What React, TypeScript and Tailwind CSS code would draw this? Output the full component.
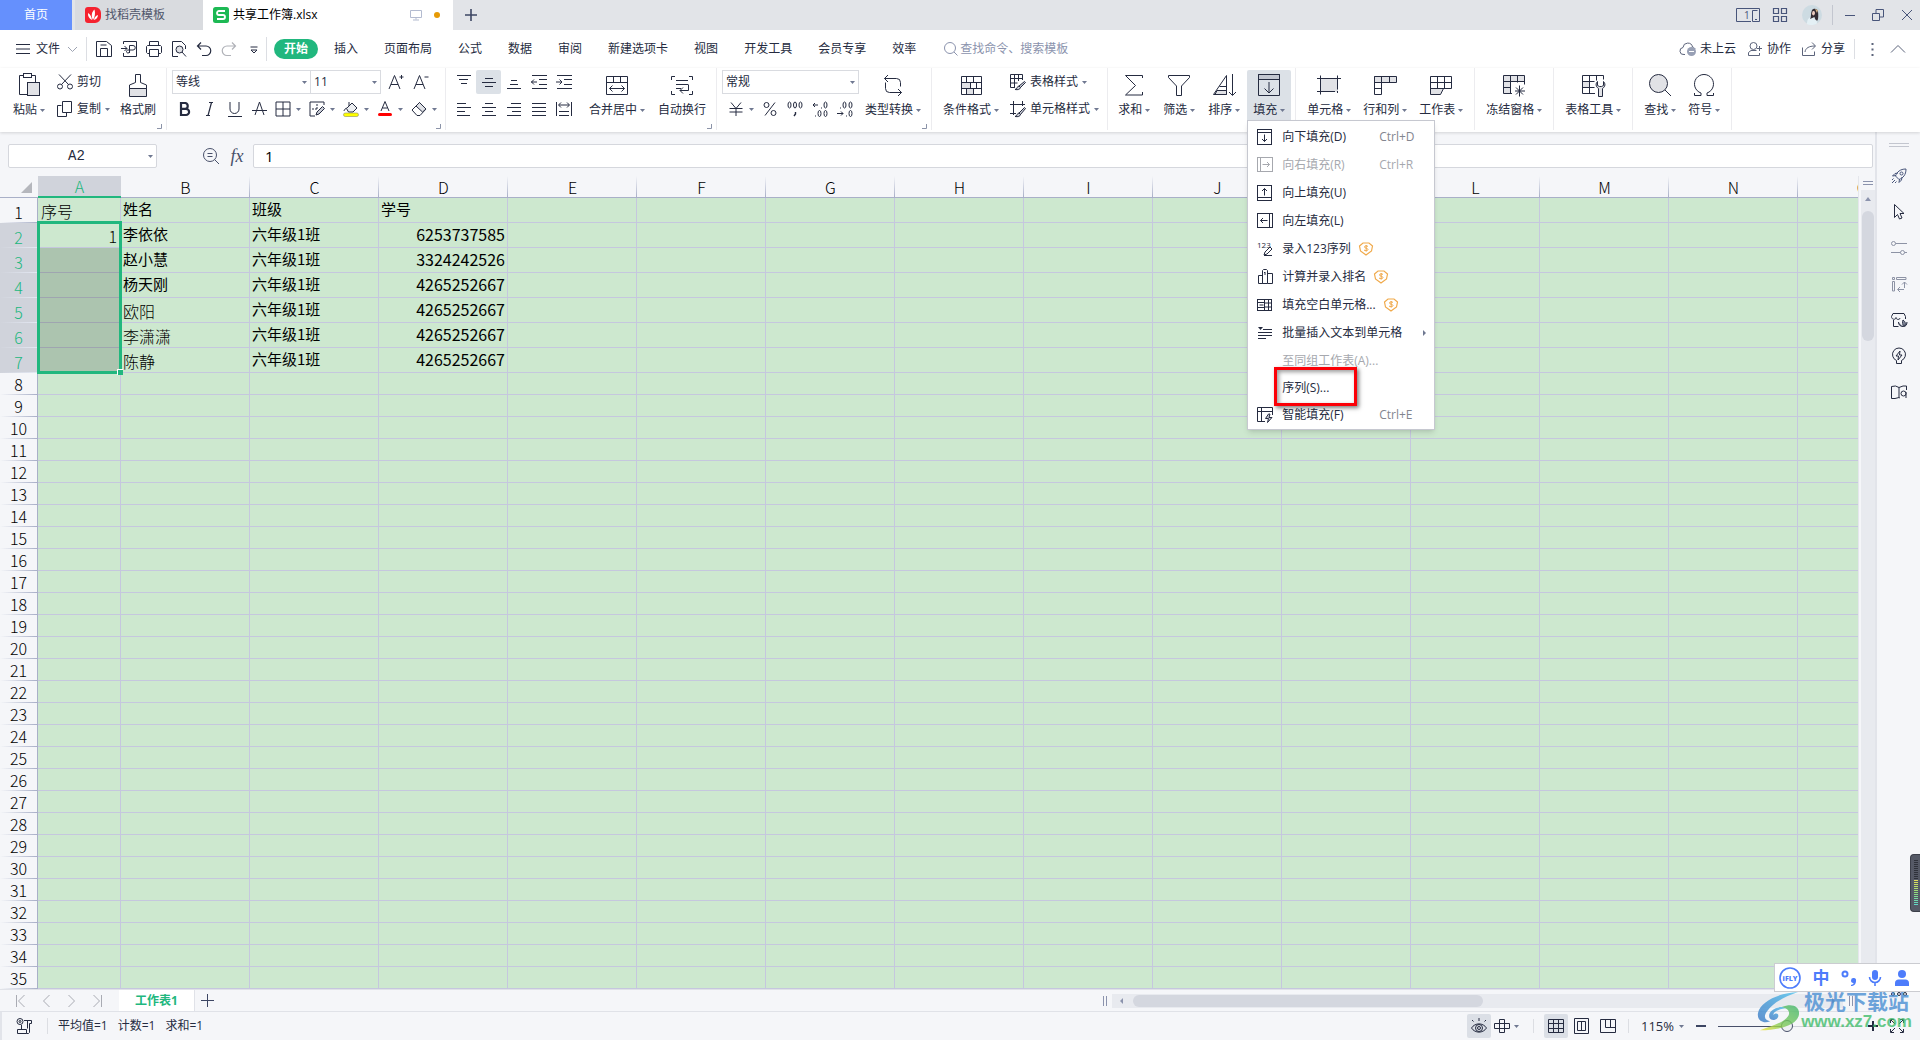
import type { ReactNode } from "react";
import { clsx } from "clsx";

const COLUMNS = ["A", "B", "C", "D", "E", "F", "G", "H", "I", "J", "K", "L", "M", "N", "O"];
const ROW_COUNT = 36;

const STUDENTS = [
    { name: "李依依", grade: "六年级1班", id: "6253737585" },
    { name: "赵小慧", grade: "六年级1班", id: "3324242526" },
    { name: "杨天刚", grade: "六年级1班", id: "4265252667" },
    { name: "欧阳", grade: "六年级1班", id: "4265252667", loose: true },
    { name: "李潇潇", grade: "六年级1班", id: "4265252667", loose: true },
    { name: "陈静", grade: "六年级1班", id: "4265252667", loose: true },
];

const TABS = ["插入", "页面布局", "公式", "数据", "审阅", "新建选项卡", "视图", "开发工具", "会员专享", "效率"];

function Icon({ w = 16, h = 16, className, children }: { w?: number; h?: number; className?: string; children: ReactNode }) {
    return (
        <svg width={w} height={h} viewBox={`0 0 ${w} ${h}`} fill="none" stroke="currentColor" className={clsx("shrink-0 overflow-visible", className)} aria-hidden="true">
            {children}
        </svg>
    );
}

function Caret({ className }: { className?: string }) {
    return (
        <svg width="5" height="3" viewBox="0 0 5 3" className={clsx("shrink-0 fill-[#6f7891]", className)} aria-hidden="true">
            <path d="M0 0h5L2.5 3z" />
        </svg>
    );
}

/* Ribbon building blocks */

function Group({ className = "px-[5px]", launcher, children }: { className?: string; launcher?: boolean; children: ReactNode }) {
    return (
        <div className={clsx("relative flex h-[62px] shrink-0 items-start border-r border-[#ececef] pt-[2px]", className)}>
            {children}
            {launcher && (
                <button aria-label="更多设置" className="absolute right-1 bottom-[1px] text-[#8b93a8]">
                    <Icon w={5} h={5}><path d="M4.5 0v4.5H0" /></Icon>
                </button>
            )}
        </div>
    );
}

function BigButton({ label, caret = true, active, children }: { label: string; caret?: boolean; active?: boolean; children: ReactNode }) {
    return (
        <button className={clsx("flex h-[50px] shrink-0 flex-col items-center gap-[5px] rounded-t-xs px-[6px] pt-[3px]", active && "bg-[#dce1e7]")}>
            <Icon w={24} h={24}>{children}</Icon>
            <span className="flex items-center gap-[3px] leading-4 whitespace-nowrap">
                {label}
                {caret && <Caret />}
            </span>
        </button>
    );
}

function SmallButton({ label, caret, children }: { label: string; caret?: boolean; children: ReactNode }) {
    return (
        <button className="flex h-6 items-center gap-1 whitespace-nowrap">
            <Icon>{children}</Icon>
            {label}
            {caret && <Caret />}
        </button>
    );
}

function Cell({ label, active, children }: { label: string; active?: boolean; children: ReactNode }) {
    return (
        <button aria-label={label} className={clsx("flex h-6 w-[25px] items-center justify-center rounded-xs", active && "bg-[#dce1e7]")}>
            <Icon>{children}</Icon>
        </button>
    );
}

function DropCell({ label, children }: { label: string; children: ReactNode }) {
    return (
        <button aria-label={label} className="flex h-6 w-[34px] items-center gap-[5px]">
            <Icon>{children}</Icon>
            <Caret />
        </button>
    );
}

function Picker({ label, value, className }: { label: string; value: string; className?: string }) {
    return (
        <div className={clsx("relative h-6", className)}>
            <select aria-label={label} defaultValue={value} className="h-full w-full appearance-none border border-[#d9dbe0] bg-white pl-[3px] leading-5">
                <option>{value}</option>
            </select>
            <Caret className="pointer-events-none absolute top-[11px] right-1" />
        </div>
    );
}

/* Fill menu */

type MenuItem = { label: string; hint?: string; disabled?: boolean; paid?: boolean; sub?: boolean; marked?: boolean; icon?: ReactNode };

const MENU: MenuItem[] = [
    { label: "向下填充(D)", hint: "Ctrl+D", icon: <><rect x=".5" y=".5" width="14" height="15" /><path d="M.5 3.5h14M7.5 5.5v7M5 10l2.5 2.5L10 10" /></> },
    { label: "向右填充(R)", hint: "Ctrl+R", disabled: true, icon: <><rect x=".5" y=".5" width="15" height="14" /><path d="M3.5.5v14M5.5 7.5h7M10 5l2.5 2.5L10 10" /></> },
    { label: "向上填充(U)", icon: <><rect x=".5" y=".5" width="14" height="15" /><path d="M.5 12.5h14M7.5 10.5v-7M5 6l2.5-2.5L10 6" /></> },
    { label: "向左填充(L)", icon: <><rect x=".5" y=".5" width="15" height="14" /><path d="M12.5.5v14M10.5 7.5h-7M6 5L3.500 7.500 6 10" /></> },
    {
        label: "录入123序列",
        paid: true,
        icon: <><text x="0" y="7" fontSize="8" fill="currentColor" stroke="none">123</text><path d="M7 14l1-3 5-5 2 2-5 5zM7 14.500h8" /></>,
    },
    { label: "计算并录入排名", paid: true, icon: <><path d="M1.500 14.500V6.500h4v8zM5.500 14.500V1.500l1-1h3l1 1v13zM10.500 4.500h5v10h-5M7 4l1-1v3" /></> },
    { label: "填充空白单元格...", paid: true, icon: <><rect x=".5" y="2.500" width="14" height="11" /><path d="M7.500 2.500v11M11.500 2.500v11M7.500 6h7M7.500 10h7M.5 5.500h7M.5 10.500h7M2.500 8h4" /></> },
    { label: "批量插入文本到单元格", sub: true, icon: <><path d="M6 4.500h9M1 7.500h14M1 10.500h14M1 13.500h8" /><path d="M1 2h5L3.500 5z" fill="currentColor" stroke="none" /></> },
    { label: "至同组工作表(A)...", disabled: true },
    { label: "序列(S)...", marked: true },
    {
        label: "智能填充(F)",
        hint: "Ctrl+E",
        icon: <><path d="M8 14.500H.5V.5h15V8M.5 4.500h15M4.500.5v14" /><path d="M11.500 7l-3 4.500h3l-1 4 4.500-5h-3l1-3.500z" fill="#c9ccd6" /></>,
    },
];

function FillMenu() {
    return (
        <div role="menu" aria-label="填充" className="absolute top-[50px] left-0 z-20 flex w-[188px] flex-col border border-[#c6c8d0] bg-white pt-[2px] shadow-md">
            {MENU.map((item) => (
                <button
                    key={item.label}
                    role="menuitem"
                    disabled={item.disabled}
                    className={clsx(
                        "relative flex items-center pr-[8px] pl-[9px] text-left whitespace-nowrap",
                        item.icon ? "h-7" : "h-[27px]",
                        item.disabled ? "text-[#a6a8ae]" : "text-[#252b40]",
                    )}
                >
                    <span className="w-[25px] shrink-0">{item.icon && <Icon>{item.icon}</Icon>}</span>
                    <span>{item.label}</span>
                    {item.paid && (
                        <Icon w={14} h={14} className="ml-2 text-[#f0a94a]">
                            <path d="M4 1h6l3.500 3-1 5L7 13 1.500 9l-1-5z" strokeWidth="1.200" />
                            <path d="M9 4.500C8 3.500 5.500 3.500 5.500 5S9 6 9 7.500 6 9 5 8M7.200 3v6.500" />
                        </Icon>
                    )}
                    {item.hint && <span className={clsx("ml-auto w-[47px]", item.disabled ? "text-[#a6a8ae]" : "text-[#83868f]")}>{item.hint}</span>}
                    {item.sub && (
                        <Icon w={3} h={6} className="ml-auto text-[#6f7891]">
                            <path d="M0 0l3 3-3 3z" fill="currentColor" stroke="none" />
                        </Icon>
                    )}
                    {item.marked && <span className="absolute -top-[7px] left-[26px] z-10 h-[39px] w-[83px] border-[3px] border-[#fb0007] shadow-[2px_2px_4px_rgba(0,0,0,0.5),inset_2px_2px_4px_rgba(0,0,0,0.4)]" />}
                </button>
            ))}
        </div>
    );
}

function TitleBar() {
    return (
        <header className="flex h-[30px] shrink-0 items-stretch bg-[#e2e4e8]">
            <button className="w-[72px] bg-[#6590fd] text-white">首页</button>
            <button className="ml-[3px] flex w-32 items-center gap-1 bg-[#d9dbdf] pl-[10px] text-[#50566b]">
                <svg width="16" height="16" viewBox="0 0 16 16" aria-hidden="true">
                    <path d="M3 0h7a6 6 0 0 1 6 6v4a6 6 0 0 1-6 6H3a3 3 0 0 1-3-3V3a3 3 0 0 1 3-3z" fill="#f5222f" />
                    <path d="M8 13C6 9 6.500 5 9.500 2.500c1 4 .5 7-1.500 10.500zM7 13C4 11.500 2.700 9 3 6c2.500 1.500 3.700 4 4 7zM9 13c.2-2.500 1.500-4 4-5-.2 2.500-1.500 4.500-4 5z" fill="#fff" />
                </svg>
                找稻壳模板
            </button>
            <div className="flex w-[250px] items-center bg-white pr-[13px] pl-[10px] text-black">
                <svg width="16" height="16" viewBox="0 0 16 16" aria-hidden="true">
                    <rect width="16" height="16" rx="2.500" fill="#1db954" />
                    <path d="M12 4H6a2 2 0 0 0 0 4h4a2 2 0 0 1 0 4H4" fill="none" stroke="#fff" strokeWidth="1.800" />
                </svg>
                <span className="ml-1">共享工作簿.xlsx</span>
                <Icon w={12} h={12} className="ml-auto text-[#b3bbd0]">
                    <path d="M.5 1.500h11v7H.5zM6 8.500v2M3 11h6" />
                </Icon>
                <span className="ml-3 size-[6px] rounded-full bg-[#e69a06]" />
            </div>
            <button aria-label="新建" className="px-3 text-[#3d4663]">
                <Icon w={12} h={12}><path d="M6 0v12M0 6h12" strokeWidth="1.600" /></Icon>
            </button>
            <div className="ml-auto flex items-center pr-2 text-[#48557a]">
                <button aria-label="窗口">
                    <Icon w={24} h={14}>
                        <path d="M15 13.500H.5V.5h23V13.500H16.500v-11h5" />
                        <text x="8" y="11" fontSize="10" fill="currentColor" stroke="none">1</text>
                        <path d="M19 11.500h2" />
                    </Icon>
                </button>
                <button aria-label="应用" className="ml-[13px]">
                    <Icon w={14} h={14}><path d="M.5.5h5v5h-5zM8.500.5h5v5h-5zM.5 8.500h5v5h-5zM8.500 8.500h5v5h-5z" strokeWidth="1.200" /></Icon>
                </button>
                <svg width="20" height="20" viewBox="0 0 20 20" className="ml-[15px]" aria-label="头像">
                    <circle cx="10" cy="10" r="10" fill="#cddbe2" />
                    <path d="M5 19c0-5 2-7 5-7s5 2 5 6.500c-3 2-7 2-10 .5z" fill="#e4f0f5" />
                    <path d="M10 5c1.500-2 5.500-2 6 1.500.4 3.500.5 7-.5 9-1.500.5-2.500-1-3-3.500L8 14c1.500-2 .5-5.500 2-9z" fill="#332c33" />
                    <path d="M10.500 6.500c1.500-1 2.500 0 2.500 1.500s-1 2.500-1.500 2.500-1.500-1-1.500-2z" fill="#ecccc0" />
                    <path d="M13 4l3 1-1 3z" fill="#d3b48a" />
                </svg>
                <span className="ml-[10px] h-5 w-px bg-[#c3c6cf]" />
                <button aria-label="最小化" className="ml-3"><Icon w={10} h={12}><path d="M0 6.500h10" /></Icon></button>
                <button aria-label="还原" className="ml-[17px]"><Icon w={12} h={12}><path d="M.5 4.500h7v7h-7zM4 4V.5h7.500V8H8" /></Icon></button>
                <button aria-label="关闭" className="ml-[18px]"><Icon w={10} h={10}><path d="M0 0l10 10M10 0L0 10" /></Icon></button>
            </div>
        </header>
    );
}

function QuickButton({ label, children }: { label: string; children: ReactNode }) {
    return (
        <button aria-label={label} className="flex h-6 w-[25px] items-center justify-center">
            <Icon>{children}</Icon>
        </button>
    );
}

function MenuBar() {
    return (
        <nav className="flex h-[38px] shrink-0 items-center bg-white">
            <button className="flex items-center pl-4">
                <Icon w={14} h={10}><path d="M0 .5h14M0 5h14M0 9.500h14" /></Icon>
                <span className="ml-[6px]">文件</span>
                <Icon w={9} h={5} className="ml-2 text-[#9da3b2]"><path d="M0 0l4.500 4.500L9 0" /></Icon>
            </button>
            <span className="ml-[9px] h-6 w-px bg-[#dcdee3]" />
            <div className="ml-1 flex">
                <QuickButton label="保存"><path d="M.5.5h10l5 4v11H.5zM4.500 15V7.500h7V15M4.500 4h6" /></QuickButton>
                <QuickButton label="输出为PDF"><path d="M2.500 3V.5h13v15h-13V12M0 7.500h6M3.500 5L6 7.500 3.500 10M8.500 12V4.500H12a2 2 0 0 1 0 4.500H7c-2 0-2 3 0 3s1.500-2 1.500-3" /></QuickButton>
                <QuickButton label="打印"><path d="M3.500 4.500v-4h9v4M3.500 12.500H1.500l-1-1v-6l1-1h13l1 1v6l-1 1h-2M3.500 8.500h9v7h-9z" /></QuickButton>
                <QuickButton label="打印预览"><path d="M7 15.500H1.500V.5h9l4 4V8" /><circle cx="8.500" cy="8.500" r="3.500" fill="#e1e2e6" /><path d="M11 11l4 4.500" /></QuickButton>
                <QuickButton label="撤销"><path d="M5 1.500L1.500 5 5 8.500M1.500 5H10a4.500 4.500 0 0 1 0 9.500H6" strokeWidth="1.200" /></QuickButton>
                <QuickButton label="恢复"><path d="M11 1.500L14.500 5 11 8.500M14.500 5H6a4.500 4.500 0 0 0 0 9.500h4" stroke="#b0b2b8" strokeWidth="1.200" /></QuickButton>
                <QuickButton label="自定义"><path d="M4.500 6h7M5 9l3 3 3-3z" /></QuickButton>
            </div>
            <span className="h-6 w-px bg-[#dcdee3]" />
            <button className="ml-[7px] h-5 w-11 rounded-full bg-[#21b77e] font-bold text-white">开始</button>
            <div className="ml-[3px] flex">
                {TABS.map((tab) => (
                    <button key={tab} className="px-[13px] whitespace-nowrap">{tab}</button>
                ))}
            </div>
            <label className="ml-[15px] flex items-center gap-[2px] text-[#8b93ad]">
                <Icon w={14} h={14}><circle cx="6" cy="6" r="5.500" /><path d="M10 10l3.500 3.500" /></Icon>
                <input aria-label="搜索" placeholder="查找命令、搜索模板" className="w-[120px] outline-none placeholder:text-[#8b93ad]" />
            </label>
            <div className="ml-auto flex items-center pr-[15px] whitespace-nowrap">
                <button className="flex items-center gap-1">
                    <Icon w={16} h={14} className="text-[#5c647b]">
                        <path d="M5 12.500H4A3.500 3.500 0 0 1 3 5.500a4.800 4.800 0 0 1 9.500-.5c1.500.5 2 1 2.500 2" />
                        <circle cx="11.500" cy="9.500" r="4.500" fill="#98a0b5" stroke="none" />
                        <path d="M9 9.500h5" stroke="#fff" />
                    </Icon>
                    未上云
                </button>
                <button className="ml-3 flex items-center gap-[5px]">
                    <Icon w={14} h={14} className="text-[#5c647b]"><circle cx="5.500" cy="4" r="3.500" /><path d="M8.500 8.500H3l-2.500 2v3h11v-2.500M9 6.500h5M11.500 4v5" /></Icon>
                    协作
                </button>
                <button className="ml-[11px] flex items-center gap-[5px]">
                    <Icon w={14} h={14} className="text-[#5c647b]"><path d="M.5 5.500v8h12v-4M3 10c.5-4 4-6 10-6M10 .5L13.500 4 10 7.500" /></Icon>
                    分享
                </button>
                <span className="ml-[9px] h-5 w-px bg-[#dcdee3]" />
                <button aria-label="更多" className="ml-4 text-[#5c647b]"><Icon w={3} h={13}><path d="M.5 1h2M.5 6.500h2M.5 12h2" strokeWidth="2" /></Icon></button>
                <button aria-label="收起功能区" className="ml-[17px] text-[#5c647b]"><Icon w={14} h={8}><path d="M0 7.500l7-7 7 7" /></Icon></button>
            </div>
        </nav>
    );
}

function Ribbon() {
    return (
        <section className="relative z-10 flex h-16 shrink-0 bg-white shadow-[0_1px_3px_rgba(0,0,0,0.14)]">
            <Group className="pr-1 pl-[7px]" launcher>
                <BigButton label="粘贴">
                    <path d="M10.500 21.500h-8v-19H6M14.500 2.500h4V9" />
                    <rect x="6.500" y=".5" width="8" height="4" />
                    <rect x="10.500" y="9.500" width="12" height="13" fill="#e1e2e6" />
                </BigButton>
                <div className="ml-[6px] flex flex-col gap-[3px] pr-1">
                    <SmallButton label="剪切">
                        <circle cx="3" cy="12.500" r="2.500" /><circle cx="13" cy="12.500" r="2.500" /><path d="M2 .5l9.500 10M14 .5l-9.500 10" />
                    </SmallButton>
                    <SmallButton label="复制" caret>
                        <path d="M4.500 4.500h-4v11h9v-4" /><path d="M5.500.5h9v11h-9z" />
                    </SmallButton>
                </div>
                <BigButton label="格式刷" caret={false}>
                    <path d="M9.500 9.500v-8h5v8l6 2.500v4.500h-17V12z" /><path d="M3.500 15.500h17v8h-17z" fill="#e1e2e6" />
                </BigButton>
            </Group>

            <Group className="pl-[5px]" launcher>
                <div className="flex flex-col gap-[3px]">
                    <div className="flex">
                        <Picker label="字体" value="等线" className="w-[139px]" />
                        <Picker label="字号" value="11" className="-ml-px w-[71px]" />
                        <div className="ml-[2px] flex">
                            <Cell label="增大字号"><path d="M1 15L6.500 1.500 12 15M3 10.500h7M11.500 3h4M13.500 1v4" /></Cell>
                            <Cell label="减小字号"><path d="M1 15L6.500 1.500 12 15M3 10.500h7M11.500 3h4" /></Cell>
                        </div>
                    </div>
                    <div className="flex">
                        <Cell label="加粗"><path d="M4 2h4.500a3 3 0 0 1 0 5.800H4zM4 7.800h5a3 3 0 0 1 0 6.200H4z" strokeWidth="2.200" /></Cell>
                        <Cell label="倾斜"><path d="M7 1.500h4M4 14.500h4M9.500 1.500l-3.500 13" strokeWidth="1.200" /></Cell>
                        <Cell label="下划线"><path d="M3 1v7a4.500 4.500 0 0 0 9 0V1M1 15.500h14" /></Cell>
                        <Cell label="删除线"><path d="M3 14L7.500 1 12 14M0 9.500h15" /></Cell>
                        <div className="ml-[3px] flex">
                            <DropCell label="边框"><path d="M1 1h14v14H1zM8 1v14M1 8h14" /></DropCell>
                            <DropCell label="绘制边框"><path d="M6 15H1V1h14v3" /><path d="M3 8h5M8 3v6" strokeDasharray="2 1" /><path d="M7 14l1-3 5.500-5.500 2 2L10 13z" fill="#c9ccd6" /></DropCell>
                            <DropCell label="填充颜色">
                                <path d="M3.500 7.500L9 2l5 5-4 4H5.500zM6 5V1M1 10c0-1 2-3 2.500-3" fill="#eceef1" />
                                <rect x=".5" y="12" width="15" height="3.500" rx="1.700" fill="#ffff00" stroke="#8c8c66" strokeWidth=".6" />
                            </DropCell>
                            <DropCell label="字体颜色"><path d="M4 10L8 .5 12 10M5.500 7h5" /><rect x="1" y="12" width="14" height="3" rx="1.500" fill="#ff0000" stroke="none" /></DropCell>
                            <DropCell label="清除"><path d="M1 9l7.500-7.500L15 8l-6 6.500H6z" /><path d="M5 5l6.500 6L15 8 8.500 1.500z" fill="#dfe1e6" /></DropCell>
                        </div>
                    </div>
                </div>
            </Group>

            <Group className="pr-1 pl-[5px]" launcher>
                <div className="grid grid-cols-[repeat(5,25px)] gap-y-[3px]">
                    <Cell label="顶端对齐"><path d="M1 1.500h14M3 5.500h9M5 9.500h6" /></Cell>
                    <Cell label="垂直居中" active><path d="M4 4.500h8M1 8.500h14M4 12.500h8" /></Cell>
                    <Cell label="底端对齐"><path d="M5 6.500h6M4 10.500h8M1 14.500h14" /></Cell>
                    <Cell label="减少缩进"><path d="M1 1.500h15M8 5.500h8M8 10.500h8M1 14.500h15M6 8H0M3 5.500L.5 8 3 10.500" /></Cell>
                    <Cell label="增加缩进"><path d="M1 1.500h15M8 5.500h8M8 10.500h8M1 14.500h15M0 8h6M3.500 5.500L6 8l-2.500 2.500" /></Cell>
                    <Cell label="左对齐"><path d="M1 2.500h9M1 6.500h14M1 10.500h8M1 14.500h13" /></Cell>
                    <Cell label="居中"><path d="M4 2.500h8M1 6.500h14M4 10.500h8M1 14.500h14" /></Cell>
                    <Cell label="右对齐"><path d="M5 2.500h10M1 6.500h14M6 10.500h9M1 14.500h14" /></Cell>
                    <Cell label="两端对齐"><path d="M1 2.500h14M1 6.500h14M1 10.500h14M1 14.500h14" /></Cell>
                    <Cell label="分散对齐"><path d="M.5 1v14M15.500 1v14M3 10.500h10M3 14.500h10M3 4h10M5 1.500L2.500 4 5 6.500M11 1.500L13.500 4 11 6.500" /></Cell>
                </div>
                <div className="ml-[7px] flex gap-px">
                    <BigButton label="合并居中">
                        <path d="M1.500 3.500h21v18h-21zM1.500 9.500h21M8.500 3.500v6M15.500 3.500v6M4.500 15.500h15M7.500 12.500l-3 3 3 3M16.500 12.500l3 3-3 3" />
                    </BigButton>
                    <BigButton label="自动换行" caret={false}>
                        <path d="M5 3.500H1.500V7M19 3.500h3.500V7M5 21.500H1.500V18M19 21.500h3.500V18M6 7.500h12M6 11.500h12M6 15.500h5M18.500 11.500v6H10M13 14.500l-3 3 3 3" />
                    </BigButton>
                </div>
            </Group>

            <Group className="pr-1 pl-[5px]" launcher>
                <div className="flex flex-col gap-[3px]">
                    <Picker label="数字格式" value="常规" className="w-[137px]" />
                    <div className="flex pl-[6px]">
                        <button aria-label="货币" className="flex h-6 w-[29px] items-center gap-[5px]">
                            <Icon><path d="M3 1.500l5 6 5-6M1.500 7.500h13M1.500 11h13M8 7.500v7.500" /></Icon>
                            <Caret />
                        </button>
                        <Cell label="百分比"><circle cx="4.500" cy="4" r="2.500" /><circle cx="11.500" cy="12" r="2.500" /><path d="M13 1.500L3 14.500" /></Cell>
                        <Cell label="千位分隔"><ellipse cx="2.500" cy="4" rx="1.500" ry="3" /><ellipse cx="8" cy="4" rx="1.500" ry="3" /><ellipse cx="13.500" cy="4" rx="1.500" ry="3" /><path d="M8.500 11v2L7 15" strokeWidth="1.400" /></Cell>
                        <Cell label="增加小数位"><path d="M6 4H1M3 2L1 4l2 2M9.500 6.500v1M3.500 14.500v1" /><ellipse cx="13.500" cy="4" rx="1.500" ry="3" /><ellipse cx="7.500" cy="12.500" rx="1.500" ry="3" /><ellipse cx="13.500" cy="12.500" rx="1.500" ry="3" /></Cell>
                        <Cell label="减少小数位"><path d="M0 12.500h6M4 10.500l2 2-2 2M3.500 6.500v1M9.500 14.500v1" /><ellipse cx="7.500" cy="4" rx="1.500" ry="3" /><ellipse cx="13.500" cy="4" rx="1.500" ry="3" /><ellipse cx="13.500" cy="12.500" rx="1.500" ry="3" /></Cell>
                    </div>
                </div>
                <BigButton label="类型转换">
                    <path d="M7 2L3.500 5.500 7 9M3.500 5.500h12a4 4 0 0 1 4 4v4M4.500 9.500v6a4 4 0 0 0 4 4h12M17 16l3.500 3.500L17 23" />
                </BigButton>
            </Group>

            <Group className="pr-2 pl-[5px]">
                <BigButton label="条件格式">
                    <path d="M2.500 9.500h5v6h-5zM7.500 15.500h7v6h-7zM7.500 9.500h4v6h-4z" fill="#e1e2e6" stroke="none" />
                    <path d="M2.500 3.500h20v18h-20zM2.500 9.500h20M2.500 15.500h20M7.500 3.500v6M14.500 3.500v6M7.500 15.500v6M14.500 15.500v6M11.500 9.500v6M17.500 9.500v6" />
                </BigButton>
                <div className="ml-[5px] flex flex-col gap-[3px]">
                    <SmallButton label="表格样式" caret>
                        <path d="M5 13.500H.5v-13h12V6M.5 4.500h12M.5 9h7M4.500.5v13M8.500.5V7" /><path d="M14.500 7.500l1 1-5 5-1.500-1.500zM9 12c-2 0-1.500 3-4 3.500 3 .5 5 0 5.500-2z" fill="#c9ccd6" />
                    </SmallButton>
                    <SmallButton label="单元格样式" caret>
                        <path d="M0 3.500h15M3.500 0v14M12.500 0v5M0 12.500h6" /><path d="M14.500 6.500l1 1-5 6L9 12zM9 12c-2 0-1.500 3-4 3.500 3 .5 5 0 5.500-2z" fill="#c9ccd6" />
                    </SmallButton>
                </div>
            </Group>

            <Group className="gap-px px-1">
                <BigButton label="求和"><path d="M20.500 5V2.500h-17l10 10-10 9.500h17v-3" /></BigButton>
                <BigButton label="筛选"><path d="M1.500 2.500h21v2l-8 8.500v9.500h-5V13l-8-8.500z" /></BigButton>
                <BigButton label="排序"><path d="M14.500 21.500V2.500l-13 19zM7.500 13.500h7M20.500 1v21M17 19l3.500 3.500L24 19" /><path d="M5 17.500h9.500v4H3z" fill="#e1e2e6" /></BigButton>
                <div className="relative">
                    <BigButton label="填充" active>
                        <path d="M1.500 1.500h21v5h-21z" fill="#c3c7d1" />
                        <path d="M1.500 1.500h21v21h-21zM12 9v11M7.500 15.500L12 20l4.500-4.500" />
                    </BigButton>
                    <FillMenu />
                </div>
            </Group>

            <Group>
                <BigButton label="单元格"><path d="M4 6h17v13H4z" fill="#e1e2e6" stroke="none" /><path d="M0 5.500h24M0 18.500h18M3.500 2.500v19M20.500 2.500v14M20.500 18v2" /></BigButton>
                <BigButton label="行和列"><path d="M1.500 3.500h22v6h-22z" fill="#e1e2e6" /><path d="M8.500 3.500v18h-7v-18M16.500 3.500v6M1.500 9.500h7M1.500 15.500h7" /></BigButton>
                <BigButton label="工作表"><path d="M1.500 15.500h13l-3 6h-10z" fill="#e1e2e6" /><path d="M1.500 3.500h21v12h-21zM1.500 9.500h21M8.500 3.500v12M15.500 3.500v12" /></BigButton>
            </Group>

            <Group>
                <BigButton label="冻结窗格">
                    <path d="M1.500 2.500h21v6h-14v12h-7z" fill="#e1e2e6" stroke="none" />
                    <path d="M10 20.500H1.500v-18h21v9M1.500 8.500h21M1.500 14.500h7M8.500 2.500v18M15.500 2.500v7M17.500 12.500v11M13 18h10M14 14.500l7 7M21 14.500l-7 7" />
                </BigButton>
            </Group>

            <Group>
                <BigButton label="表格工具">
                    <path d="M14 20.500H1.500v-18h21v4M1.500 8.500h12M1.500 14.500h12M8.500 2.500v18M15.500 2.500v5" />
                    <path d="M2 9h6v5H2z" fill="#e1e2e6" stroke="none" />
                    <path d="M16.500 8.500c-2 2-2 5 1 7v8h4v-8c3-2 3-5 1-7v4l-2 1h-2l-2-1z" fill="#e1e2e6" />
                </BigButton>
            </Group>

            <Group>
                <BigButton label="查找"><circle cx="10.500" cy="10.500" r="9" fill="#e1e2e6" /><path d="M17 17l6 6" /></BigButton>
                <BigButton label="符号"><path d="M2.500 20v2.500h6.500V20a9.500 9.500 0 1 1 6 0v2.500h6.500V20" /></BigButton>
            </Group>
        </section>
    );
}

function FormulaBar() {
    return (
        <div className="flex h-11 shrink-0 items-center pt-1 pr-[2px] pl-2">
            <div className="relative h-6 w-[149px]">
                <input aria-label="名称框" defaultValue="A2" className="h-full w-full rounded-xs border border-[#d5d7dd] bg-white pr-3 text-center font-['Liberation_Mono',monospace] text-[14px] text-[#252b40]" />
                <Caret className="absolute top-[11px] right-1" />
            </div>
            <button aria-label="查找公式" className="ml-[46px] text-[#48506a]">
                <Icon><circle cx="7" cy="7" r="6.500" /><path d="M11.500 11.500l4.500 4.500M4.500 5.500h5M4.500 8.500h5" /></Icon>
            </button>
            <button aria-label="插入函数" className="ml-[11px] w-[14px] font-['Liberation_Serif',serif] text-[18px] leading-5 text-[#48506a] italic">fx</button>
            <input aria-label="编辑栏" defaultValue="1" className="ml-[9px] h-6 min-w-0 flex-1 rounded-xs border border-[#d5d7dd] bg-white px-[11px] text-[15px] text-black" />
        </div>
    );
}

function Sheet() {
    return (
        <div className="min-h-0 min-w-0 flex-1 overflow-hidden bg-[#cde8cf]">
            <table className="w-full table-fixed border-separate border-spacing-0 font-['Noto_Sans_CJK_SC',sans-serif] text-black">
                <colgroup>
                    <col className="w-[38px]" />
                    <col className="w-[83px]" />
                    {COLUMNS.slice(1).map((c) => <col key={c} className="w-[129px]" />)}
                </colgroup>
                <thead>
                    <tr className="h-[22px]">
                        <th className="border-b border-[#a9b0c8] bg-[#f5f6f9] p-0">
                            <Icon w={12} h={12} className="mt-[3px] mr-[5px] ml-auto text-[#b5b7bd]"><path d="M11 0v11H0z" fill="currentColor" stroke="none" /></Icon>
                        </th>
                        {COLUMNS.map((c) => (
                            <th
                                key={c}
                                className={clsx(
                                    "p-0 align-bottom text-[16px] leading-5 font-light",
                                    c === "A"
                                        ? "border-b-2 border-[#21b77e] bg-[#d0d3db] text-[#21b77e]"
                                        : "border-b border-[#a9b0c8] bg-[#f5f6f9] bg-linear-to-b from-transparent to-[#a9b0c8] bg-[length:1px_100%] bg-right bg-no-repeat",
                                )}
                            >
                                {c}
                            </th>
                        ))}
                    </tr>
                </thead>
                <tbody>
                    {Array.from({ length: ROW_COUNT }, (_, i) => <SheetRow key={i} row={i + 1} />)}
                </tbody>
            </table>
        </div>
    );
}

function SheetRow({ row }: { row: number }) {
    const student = STUDENTS[row - 2];
    const selected = row >= 2 && row <= 7;

    return (
        <tr className={row <= 7 ? "h-[25px]" : "h-[22px]"}>
            <th
                className={clsx(
                    "border-r border-[#a9b0c8] bg-linear-to-r from-transparent bg-[length:100%_1px] bg-bottom bg-no-repeat p-0 align-bottom text-[16px] leading-[22px] font-light",
                    selected ? "bg-[#d0d3db] to-[#e3e7f2] text-[#21b77e]" : "bg-[#f5f6f9] to-[#a9b0c8]",
                )}
            >
                {row}
            </th>
            {COLUMNS.map((c) => {
                const base = "border-r border-b border-[#c5c7de] p-0 leading-[22px] whitespace-nowrap";
                if (c === "A") {
                    return (
                        <td
                            key={c}
                            className={clsx(
                                base,
                                "relative px-[3px] align-bottom text-[16px] font-light",
                                selected && "text-right",
                                selected && row > 2 && "border-b-[#9fa5b0] bg-[#acc4af]",
                            )}
                        >
                            {row === 1 && "序号"}
                            {row === 2 && "1"}
                            {row === 2 && (
                                <span className="pointer-events-none absolute -top-[2px] -left-px z-[1] h-[153px] w-[85px] border-[3px] border-[#21b77e]">
                                    <span className="absolute -right-1 -bottom-1 size-[6px] border-t border-l border-white bg-[#21b77e]" />
                                </span>
                            )}
                        </td>
                    );
                }
                if (c === "B") {
                    return (
                        <td key={c} className={clsx(base, "pl-[2px]", student?.loose ? "align-bottom text-[16px] font-light" : "align-top text-[15px]")}>
                            {row === 1 ? "姓名" : student?.name}
                        </td>
                    );
                }
                if (c === "C") {
                    return <td key={c} className={clsx(base, "pl-[2px] align-top text-[15px]")}>{row === 1 ? "班级" : student?.grade}</td>;
                }
                if (c === "D") {
                    return <td key={c} className={clsx(base, "px-[2px] align-top", student ? "text-right text-[16px]" : "text-[15px]")}>{row === 1 ? "学号" : student?.id}</td>;
                }
                return <td key={c} className={base} />;
            })}
        </tr>
    );
}

function VerticalScroll() {
    return (
        <div className="flex w-[17px] shrink-0 flex-col border-l border-[#e4e6ec] pl-[2px]">
            <div className="flex h-[14px] items-center justify-center text-[#8b93ad]">
                <Icon w={10} h={4}><path d="M0 .5h10M0 3.500h10" /></Icon>
            </div>
            <div className="flex flex-1 flex-col items-center bg-[#e8eaef]">
                <Icon w={6} h={4} className="mt-[7px] text-[#8b93ad]"><path d="M3 0l3 4H0z" fill="currentColor" stroke="none" /></Icon>
                <span className="mt-[10px] h-[130px] w-3 rounded-full bg-[#d4d7df]" />
            </div>
        </div>
    );
}

function SideButton({ label, muted, children }: { label: string; muted?: boolean; children: ReactNode }) {
    return (
        <button aria-label={label} className={clsx("flex h-9 items-center justify-center", muted ? "text-[#8d93a5]" : "text-[#252b40]")}>
            <Icon>{children}</Icon>
        </button>
    );
}

function SidePanel() {
    return (
        <aside className="flex w-[45px] shrink-0 flex-col items-center border-l-2 border-[#e2e4ea]">
            <Icon w={20} h={5} className="mt-[11px] mb-[10px] text-[#c3c6cf]"><path d="M0 .5h20M0 3.500h20" /></Icon>
            <SideButton label="快捷工具"><path d="M4.500 8C6 4 9 1 15 1c0 6-3 9-7 10.500zM5 7.500L1.500 8 4 5.500l3-.5M8.500 11L8 14.500l2.500-2.500.5-3M1 15l3-3M1 12l1.500-1.500M4 15l1.500-1.500" stroke="#48557a" /><circle cx="10.500" cy="5.500" r="1.500" stroke="#48557a" /></SideButton>
            <SideButton label="选择"><path d="M3.500.5v13l3-3 2 4.500 2.500-1-2-4.500h4z" /></SideButton>
            <SideButton label="属性" muted><circle cx="2.500" cy="3.500" r="2" /><path d="M4.500 3.500H16M0 12.500h9.500M13.500 12.500H16" /><circle cx="11.500" cy="12.500" r="2" /></SideButton>
            <SideButton label="透视表" muted><path d="M1.500 1.500h2v2h-2zM5.500 1.500h9.500v2H5.500zM1.500 5.500h2V15h-2zM13.500 12V6M11 8.500L13.500 6 16 8.500M13 13.500H7M9 11l-2.500 2.500L9 16" /></SideButton>
            <SideButton label="模板"><path d="M2.500 8v6.500h5M.5 4.500l1.500-3h11l1.500 3V7M.5 4.500C.5 8 5 8 5 5.500 5 8 9 8 9 6" /><path d="M12 8c-1 2 0 5 .5 6.500C15 13 15 10 12 8zM7.500 10c0 3 2 4.500 4.500 4.500M16 10c0 3-1.500 4.500-3.500 4.500" fill="#8d93a5" /></SideButton>
            <SideButton label="智能"><path d="M5.500 12.500v3h5v-3a6.500 6.500 0 1 0-5 0z" /><path d="M9 3L5 8h2.500L7 12l4-5H8.500z" /></SideButton>
            <SideButton label="帮助"><path d="M9 14L8 13.500 4 14.500H.5v-12l4-.5L8 3.500V13M8 3.500l4-1.500h3.500v4" /><circle cx="12.500" cy="9.500" r="2.500" /><path d="M15 8v6" /></SideButton>
            <button aria-label="更多工具" className="mt-auto mb-4 text-[#252b40]">
                <Icon w={16} h={4}><circle cx="2" cy="2" r="1.500" /><circle cx="8" cy="2" r="1.500" /><circle cx="14" cy="2" r="1.500" /></Icon>
            </button>
        </aside>
    );
}

function SheetTabs() {
    return (
        <div className="flex h-[23px] shrink-0 items-stretch border-t border-b border-[#e0e2e8]">
            <div className="flex w-[119px] shrink-0 items-center gap-[18px] pl-4 text-[#a9abb3]">
                <button aria-label="第一个"><Icon w={9} h={12}><path d="M.5 0v12M8.500 0l-6 6 6 6" /></Icon></button>
                <button aria-label="上一个"><Icon w={7} h={12}><path d="M6.500 0l-6 6 6 6" /></Icon></button>
                <button aria-label="下一个"><Icon w={7} h={12}><path d="M.5 0l6 6-6 6" /></Icon></button>
                <button aria-label="最后一个"><Icon w={9} h={12}><path d="M8.500 0v12M.5 0l6 6-6 6" /></Icon></button>
            </div>
            <button className="w-[76px] border-r border-[#e0e2e8] bg-white font-bold text-[#21b77e]">工作表1</button>
            <button aria-label="新建工作表" className="px-[6px] text-[#3d4663]"><Icon w={13} h={13}><path d="M6.500 0v13M0 6.500h13" /></Icon></button>
            <div className="ml-auto flex w-[41.2%] items-center text-[#8b93ad]">
                <Icon w={4} h={10} className="mr-[5px]"><path d="M.5 0v10M3.500 0v10" /></Icon>
                <div className="flex h-[14px] flex-1 items-center bg-[#e8eaef] px-2">
                    <Icon w={3} h={6}><path d="M3 0L0 3l3 3z" fill="currentColor" stroke="none" /></Icon>
                    <span className="ml-[10px] h-3 w-[49%] rounded-full bg-[#d4d7df]" />
                    <Icon w={3} h={6} className="ml-auto"><path d="M0 0l3 3-3 3z" fill="currentColor" stroke="none" /></Icon>
                </div>
                <Icon w={4} h={10} className="mr-[22px] ml-[6px]"><path d="M.5 0v10M3.500 0v10" /></Icon>
            </div>
        </div>
    );
}

function StatusBar() {
    return (
        <footer className="flex h-7 shrink-0 items-center border-l-2 border-[#e2e4ea] pr-4 whitespace-nowrap">
            <Icon className="ml-[14px]"><circle cx="4" cy="3.500" r="3" /><circle cx="4" cy="3.500" r="1" /><path d="M8 2.500h7.500v3h-2v9M11.500 2.500v8M5.500 7v4.500M1.500 11.500h9v4h-9zM10.500 15.500h2l1-1" /></Icon>
            <span className="ml-[15px] h-4 w-px bg-[#dcdee3]" />
            <div className="ml-[10px] flex gap-[10px]">
                <span>平均值=1</span>
                <span>计数=1</span>
                <span>求和=1</span>
            </div>
            <div className="ml-auto flex items-center">
                <button aria-label="护眼模式" className="flex size-6 items-center justify-center rounded-xs bg-[#dbdfe6]">
                    <Icon><path d="M.5 10C4 4.500 12 4.500 15.500 10 12 15.500 4 15.500.5 10zM1 2l1.500 1.500M15 2l-1.500 1.500M8 0v3" /><circle cx="8" cy="10" r="3.500" /><circle cx="8" cy="10" r="1.500" /></Icon>
                </button>
                <button aria-label="阅读模式" className="ml-[3px] flex items-center gap-1">
                    <Icon><path d="M5.500 1.500h5v13h-5zM.5 5.500h15v5H.5z" /></Icon>
                    <Caret />
                </button>
                <span className="mr-[10px] ml-[14px] h-[14px] w-px bg-[#dcdee3]" />
                <button aria-label="普通视图" className="flex size-6 items-center justify-center rounded-xs bg-[#dbdfe6]">
                    <Icon><path d="M.5 1.500h15v13H.5zM.5 5.500h15M.5 10.500h15M5.500 1.500v13M10.500 1.500v13" /></Icon>
                </button>
                <button aria-label="分页预览" className="ml-[6px]"><Icon><path d="M.5.5h14v15H.5zM3.500 3.500h8v9h-8zM7.500 3.500v9" /></Icon></button>
                <button aria-label="页面布局视图" className="ml-[10px]"><Icon><path d="M.5 1.500h15v13H.5zM5.500 1.500v8h10M10.500 1.500v8" /></Icon></button>
                <span className="mx-[12px] h-[14px] w-px bg-[#dcdee3]" />
                <button className="flex items-center gap-[5px] text-[13px]">115%<Caret /></button>
                <button aria-label="缩小" className="ml-3 text-[#3d4663]"><Icon w={10} h={10}><path d="M0 5h10" strokeWidth="2" /></Icon></button>
                <input
                    type="range"
                    aria-label="显示比例"
                    defaultValue={50}
                    className="mx-3 h-4 w-[138px] appearance-none bg-[linear-gradient(to_right,#48506a_50%,#cfd2da_50%)] bg-[length:100%_1px] bg-center bg-no-repeat [&::-webkit-slider-thumb]:size-3 [&::-webkit-slider-thumb]:appearance-none [&::-webkit-slider-thumb]:rounded-full [&::-webkit-slider-thumb]:border [&::-webkit-slider-thumb]:border-[#48506a] [&::-webkit-slider-thumb]:bg-[#eef0f3]"
                />
                <button aria-label="放大" className="text-[#252b40]"><Icon w={10} h={10}><path d="M0 5h10M5 0v10" strokeWidth="2" /></Icon></button>
                <button aria-label="全屏" className="ml-3"><Icon w={14} h={14}><path d="M.5 4V.5H4M1 1l4 4M10 .5h3.500V4M13 1L9 5M.5 10v3.500H4M1 13l4-4M13.500 10v3.500H10M13 13L9 9" /></Icon></button>
            </div>
        </footer>
    );
}

/* Floating things that live above the spreadsheet window */

function InputMethodBar() {
    return (
        <div className="absolute right-0 bottom-12 z-30 flex h-[29px] w-[146px] items-center border border-r-0 border-[#cbccd1] bg-white pl-1 text-[#4d7cfb]">
            <svg width="22" height="22" viewBox="0 0 22 22" aria-label="iFLY">
                <circle cx="11" cy="11" r="10" fill="none" stroke="currentColor" strokeWidth="1.600" />
                <text x="11" y="13.500" textAnchor="middle" fontSize="7" fontWeight="800" fill="currentColor">iFLY</text>
            </svg>
            <button className="ml-[11px] w-[18px] text-[17px] leading-5 font-bold">中</button>
            <button aria-label="标点" className="ml-[11px]">
                <Icon><circle cx="4" cy="4" r="2.500" strokeWidth="2" /><path d="M10 15c2-.5 2.500-1 2.500-2a2.500 2.500 0 1 1 2.500-2c0 3-2 5-5 5z" fill="currentColor" stroke="none" /></Icon>
            </button>
            <button aria-label="语音" className="ml-[10px]">
                <Icon><rect x="5" y="0" width="6" height="10" rx="3" fill="currentColor" stroke="none" /><path d="M2.500 7a5.500 5.500 0 0 0 11 0M8 12.500V16" strokeWidth="1.600" /></Icon>
            </button>
            <button aria-label="账户" className="ml-[11px]">
                <Icon><circle cx="8" cy="4" r="4" fill="currentColor" stroke="none" /><path d="M1 16v-3c0-2 1.500-3.500 3.500-3.500h7c2 0 3.500 1.500 3.500 3.500v3z" fill="currentColor" stroke="none" /></Icon>
            </button>
        </div>
    );
}

function Watermark() {
    return (
        <div className="pointer-events-none absolute right-2 bottom-2 z-20 flex items-center gap-[2px] opacity-80">
            <svg width="42" height="39" viewBox="0 0 122 115" aria-hidden="true">
                <defs>
                    <linearGradient id="sky" x1="1" y1="0" x2="0" y2="1">
                        <stop offset="0" stopColor="#4fc3ee" />
                        <stop offset="1" stopColor="#3a78c4" />
                    </linearGradient>
                    <linearGradient id="leaf" x1="1" y1="0" x2="0" y2="1">
                        <stop offset="0" stopColor="#3fb56c" />
                        <stop offset=".6" stopColor="#7fca58" />
                        <stop offset="1" stopColor="#f4e632" />
                    </linearGradient>
                </defs>
                <path d="M120 0C70 2 10 25 2 62c-4 23 18 33 36 24-18-2-20-16-8-31C48 30 85 12 120 0z" fill="url(#sky)" />
                <path d="M92 48C62 36 28 56 36 76c6 12 26 6 26-6 0-8-10-8-14-2-2-12 22-20 44-20z" fill="url(#sky)" />
                <path d="M72 44c36-14 56 2 50 26-8 28-54 42-114 43 34-14 72-22 84-44 6-12-4-22-20-25z" fill="url(#leaf)" />
            </svg>
            <div className="text-center font-bold whitespace-nowrap">
                <p className="text-[21px] leading-[22px] text-[#4b8fd3]">极光下载站</p>
                <p className="font-['Liberation_Sans',sans-serif] text-[17px] leading-5 text-[#43bd6d]">www.xz7.com</p>
            </div>
        </div>
    );
}

function LevelMeter() {
    return (
        <div className="absolute right-0 bottom-32 z-20 flex h-[58px] w-[10px] flex-col justify-center rounded-l-[4px] border border-r-0 border-[#3c3f4a] bg-[#555966] pl-[3px]">
            <span className="h-5 w-1 bg-[repeating-linear-gradient(#2e313a_0_1px,transparent_1px_2px)]" />
            <span className="h-[26px] w-1 bg-[repeating-linear-gradient(transparent_0_1px,#555966_1px_2px),linear-gradient(#e6e05a,#8fdc7c,#5ad6d0)]" />
        </div>
    );
}

export default function App() {
    return (
        <div className="relative flex h-screen flex-col overflow-hidden bg-[#f5f6f9] font-['Open_Sans','Noto_Sans_CJK_SC',sans-serif] text-[12px] leading-4 text-[#252b40]">
            <TitleBar />
            <MenuBar />
            <Ribbon />
            <main className="flex min-h-0 flex-1">
                <div className="flex min-w-0 flex-1 flex-col">
                    <FormulaBar />
                    <div className="flex min-h-0 flex-1">
                        <Sheet />
                        <VerticalScroll />
                    </div>
                    <SheetTabs />
                </div>
                <SidePanel />
            </main>
            <StatusBar />
            <LevelMeter />
            <Watermark />
            <InputMethodBar />
        </div>
    );
}
